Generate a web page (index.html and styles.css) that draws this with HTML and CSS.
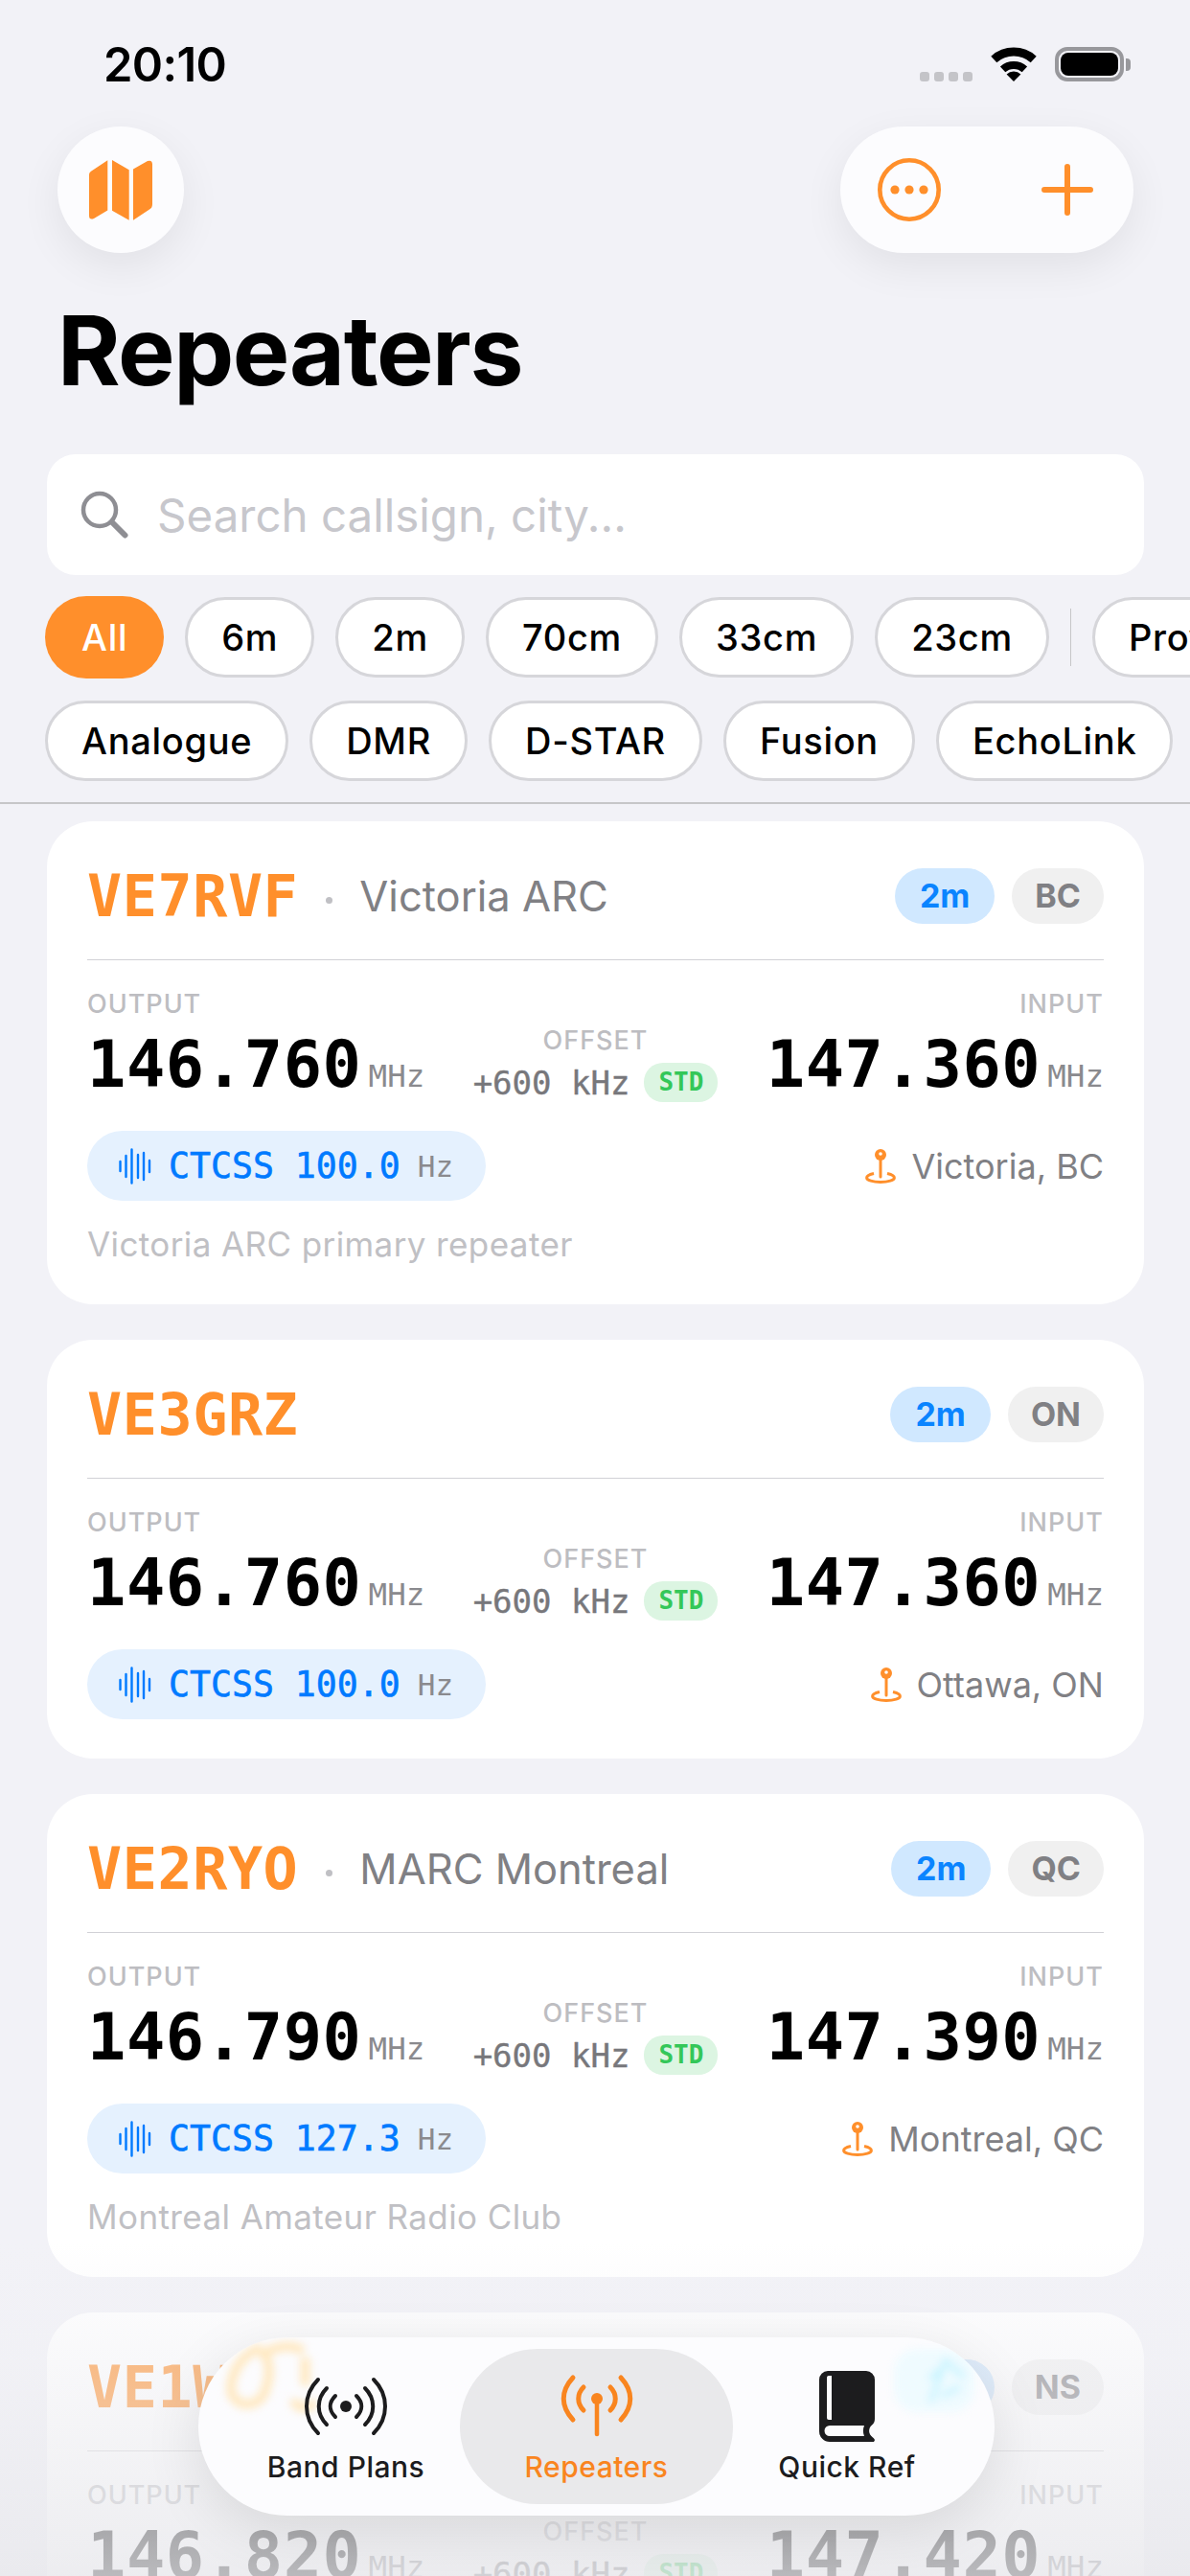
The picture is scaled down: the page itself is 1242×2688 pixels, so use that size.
FILE: index.html
```html
<!DOCTYPE html>
<html lang="en">
<head>
    <meta charset="UTF-8">
    <meta name="viewport" content="width=device-width, initial-scale=1.0">
    <title>Repeaters</title>
    <link rel="stylesheet" href="styles.css">
</head>
<body>
    <svg class="defs" aria-hidden="true">
        <symbol id="wave" viewBox="0 0 34 38">
            <g stroke="#007aff" stroke-width="2.4" stroke-linecap="round">
                <path d="M1.5 14V24M7.5 8V30M13.5 1.5V36.5M20 7V31M26 5V33M32 13V25"/>
            </g>
        </symbol>
        <symbol id="pin" viewBox="0 0 32 36">
            <path d="M9 25.5C4.5 26.5 1.6 28.200 1.6 30C1.600 32.500 8 34.400 16 34.400C24 34.400 30.400 32.500 30.400 30C30.400 28.200 27.500 26.500 23 25.500" fill="none" stroke="#ff8f2b" stroke-width="3"/>
            <path d="M16 10V29" stroke="#ff8f2b" stroke-width="3" stroke-linecap="round"/>
            <circle cx="16" cy="6" r="6" fill="#ff8f2b"/>
            <circle cx="16" cy="5" r="1.800" fill="#fff"/>
        </symbol>
    </svg>

    <header class="status">
        <span class="time">20:10</span>
        <div class="status-icons">
            <div class="signal"><i></i><i></i><i></i><i></i></div>
            <svg class="wifi" viewBox="0 0 48 36">
                <path d="M3.300 13A31 31 0 0 1 44.700 13" fill="none" stroke="#000" stroke-width="9"/>
                <path d="M12.600 23.400A17 17 0 0 1 35.400 23.400" fill="none" stroke="#000" stroke-width="8"/>
                <path d="M24 36L16.600 28.600A10.500 10.500 0 0 1 31.400 28.600Z"/>
            </svg>
            <div class="battery"><i></i></div>
            <div class="battery-cap"></div>
        </div>
    </header>

    <div class="topbar">
        <button class="round-btn">
            <svg width="66" height="63" viewBox="0 0 66 63" fill="#ff8f2b">
                <path d="M0 15Q0 13 2 11.800L19.300 .3V52.500L5 61Q0 63 0 58Z"/>
                <path d="M24 0L41.700 10.300V62.700L24 52.700Z"/>
                <path d="M46 9.500L61 1Q66 -.5 66 4.500V46Q66 50 63 51.500L46 62.700Z"/>
            </svg>
        </button>
        <div class="pill-btn">
            <svg width="66" height="66" viewBox="0 0 66 66" fill="#ff8f2b">
                <circle cx="33" cy="33" r="30.700" fill="none" stroke="#ff8f2b" stroke-width="4.600"/>
                <circle cx="18" cy="33" r="4.600"/>
                <circle cx="33" cy="33" r="4.600"/>
                <circle cx="48" cy="33" r="4.600"/>
            </svg>
            <svg width="54" height="54" viewBox="0 0 54 54">
                <path d="M27 3V51M3 27H51" stroke="#ff8f2b" stroke-width="6" stroke-linecap="round"/>
            </svg>
        </div>
    </div>

    <h1 class="title">Repeaters</h1>

    <div class="search">
        <svg width="50" height="50" viewBox="0 0 50 50" fill="none" stroke="#8e8e93">
            <circle cx="20" cy="20" r="17" stroke-width="4.500"/>
            <path d="M33 33L46.500 46.500" stroke-width="6" stroke-linecap="round"/>
        </svg>
        <span class="placeholder">Search callsign, city...</span>
    </div>

    <div class="filters">
        <div class="chip-row">
            <span class="chip chip-on">All</span>
            <span class="chip">6m</span>
            <span class="chip">2m</span>
            <span class="chip">70cm</span>
            <span class="chip">33cm</span>
            <span class="chip">23cm</span>
            <span class="chip-sep"></span>
            <span class="chip">Province</span>
        </div>
        <div class="chip-row">
            <span class="chip">Analogue</span>
            <span class="chip">DMR</span>
            <span class="chip">D-STAR</span>
            <span class="chip">Fusion</span>
            <span class="chip">EchoLink</span>
        </div>
    </div>

    <main class="list">
        <article class="card">
            <div class="card-head">
                <span class="callsign">VE7RVF</span>
                <span class="dot"></span>
                <span class="club">Victoria ARC</span>
                <span class="badge badge-band">2m</span>
                <span class="badge badge-region">BC</span>
            </div>
            <div class="freqs">
                <div class="freq">
                    <div class="label">OUTPUT</div>
                    <div class="value">146.760<small>MHz</small></div>
                </div>
                <div class="offset">
                    <div class="label">OFFSET</div>
                    <div class="offset-row"><span class="offset-value">+600 kHz</span><span class="std">STD</span></div>
                </div>
                <div class="freq freq-in">
                    <div class="label">INPUT</div>
                    <div class="value">147.360<small>MHz</small></div>
                </div>
            </div>
            <div class="tone-row">
                <div class="tone">
                    <svg width="34" height="38"><use href="#wave"/></svg>
                    <span class="tone-value">CTCSS 100.0</span><span class="tone-unit">Hz</span>
                </div>
                <div class="place">
                    <svg width="32" height="36"><use href="#pin"/></svg>
                    <span>Victoria, BC</span>
                </div>
            </div>
            <p class="note">Victoria ARC primary repeater</p>
        </article>

        <article class="card">
            <div class="card-head">
                <span class="callsign">VE3GRZ</span>
                <span class="badge badge-band">2m</span>
                <span class="badge badge-region">ON</span>
            </div>
            <div class="freqs">
                <div class="freq">
                    <div class="label">OUTPUT</div>
                    <div class="value">146.760<small>MHz</small></div>
                </div>
                <div class="offset">
                    <div class="label">OFFSET</div>
                    <div class="offset-row"><span class="offset-value">+600 kHz</span><span class="std">STD</span></div>
                </div>
                <div class="freq freq-in">
                    <div class="label">INPUT</div>
                    <div class="value">147.360<small>MHz</small></div>
                </div>
            </div>
            <div class="tone-row">
                <div class="tone">
                    <svg width="34" height="38"><use href="#wave"/></svg>
                    <span class="tone-value">CTCSS 100.0</span><span class="tone-unit">Hz</span>
                </div>
                <div class="place">
                    <svg width="32" height="36"><use href="#pin"/></svg>
                    <span>Ottawa, ON</span>
                </div>
            </div>
        </article>

        <article class="card">
            <div class="card-head">
                <span class="callsign">VE2RYO</span>
                <span class="dot"></span>
                <span class="club">MARC Montreal</span>
                <span class="badge badge-band">2m</span>
                <span class="badge badge-region">QC</span>
            </div>
            <div class="freqs">
                <div class="freq">
                    <div class="label">OUTPUT</div>
                    <div class="value">146.790<small>MHz</small></div>
                </div>
                <div class="offset">
                    <div class="label">OFFSET</div>
                    <div class="offset-row"><span class="offset-value">+600 kHz</span><span class="std">STD</span></div>
                </div>
                <div class="freq freq-in">
                    <div class="label">INPUT</div>
                    <div class="value">147.390<small>MHz</small></div>
                </div>
            </div>
            <div class="tone-row">
                <div class="tone">
                    <svg width="34" height="38"><use href="#wave"/></svg>
                    <span class="tone-value">CTCSS 127.3</span><span class="tone-unit">Hz</span>
                </div>
                <div class="place">
                    <svg width="32" height="36"><use href="#pin"/></svg>
                    <span>Montreal, QC</span>
                </div>
            </div>
            <p class="note">Montreal Amateur Radio Club</p>
        </article>

        <article class="card">
            <div class="card-head">
                <span class="callsign">VE1WRC</span>
                <span class="badge badge-band">2m</span>
                <span class="badge badge-region">NS</span>
            </div>
            <div class="freqs">
                <div class="freq">
                    <div class="label">OUTPUT</div>
                    <div class="value">146.820<small>MHz</small></div>
                </div>
                <div class="offset">
                    <div class="label">OFFSET</div>
                    <div class="offset-row"><span class="offset-value">+600 kHz</span><span class="std">STD</span></div>
                </div>
                <div class="freq freq-in">
                    <div class="label">INPUT</div>
                    <div class="value">147.420<small>MHz</small></div>
                </div>
            </div>
        </article>
    </main>

    <div class="fade"></div>

    <nav class="tabbar">
        <!-- colour smears the glass picks up from the card below -->
        <svg class="smear smear-orange" width="108" height="84" viewBox="0 0 100 80" fill="none" stroke="#ffe8bf" stroke-width="9">
            <path d="M38 8C20 14 8 32 8 50C10 66 30 70 40 56C48 40 48 22 40 14C60 4 72 6 80 12M70 60C74 70 84 70 92 62M82 18V46"/>
        </svg>
        <div class="smear smear-blob"></div>
        <svg class="smear smear-cyan" width="64" height="56" viewBox="0 0 84 68" fill="none" stroke="#c4f3ff" stroke-width="6">
            <path d="M32 62L52 6L78 28M46 54L72 42M30 30L46 18"/>
        </svg>
        <div class="tab">
            <svg width="88" height="74" viewBox="-44 -37 88 74" fill="none" stroke="#1c1c1e" stroke-width="4" stroke-linecap="round">
                <circle r="6" fill="#1c1c1e" stroke="none"/>
                <path d="M29 -28C45 -12 45 12 29 28M20 -19C31 -8 31 8 20 19M11 -11C18 -4 18 4 11 11"/>
                <path d="M-29 -28C-45 -12 -45 12 -29 28M-20 -19C-31 -8 -31 8 -20 19M-11 -11C-18 -4 -18 4 -11 11"/>
            </svg>
            <span>Band Plans</span>
        </div>
        <div class="tab tab-on">
            <svg width="76" height="74" viewBox="-38 -29 76 74" fill="none" stroke="#f9851f" stroke-width="5" stroke-linecap="round">
                <circle r="6" fill="#f9851f" stroke="none"/>
                <path d="M0 4V37" stroke-width="4.500"/>
                <path d="M25 -22C38 -8 38 8 25 22M14 -12C21 -5 21 5 14 12"/>
                <path d="M-25 -22C-38 -8 -38 8 -25 22M-14 -12C-21 -5 -21 5 -14 12"/>
            </svg>
            <span>Repeaters</span>
        </div>
        <div class="tab">
            <svg width="58" height="74" viewBox="0 0 58 74">
                <path d="M9 0H49A9 9 0 0 1 58 9V50C58 53 57 55 55 56.500C51 60 51 66 56 69.500C59 71.500 58 74 56 74H11A11 11 0 0 1 0 63V9A9 9 0 0 1 9 0Z" fill="#1c1c1e"/>
                <path d="M10 5H13V51H10A2 2 0 0 1 8 49V7A2 2 0 0 1 10 5Z" fill="#fcfcfe"/>
                <path d="M11 57H47C45.500 60.500 45.500 64.500 47 68H11A5.500 5.500 0 0 1 11 57Z" fill="#fcfcfe"/>
            </svg>
            <span>Quick Ref</span>
        </div>
    </nav>
</body>
</html>
```

FILE: styles.css
```css
* {
    box-sizing: border-box;
}
html, body {
    margin: 0;
    padding: 0;
}
body {
    position: relative;
    width: 1242px;
    height: 2688px;
    overflow: hidden;
    background-color: #f2f2f7;
    font-family: Inter, "Noto Sans", sans-serif;
    color: #000;
}
.defs {
    display: none;
}

/* status bar */
.status {
    display: flex;
    justify-content: space-between;
    height: 132px;
    padding: 40px 62px 0 108px;
}
.time {
    font-size: 49px;
    font-weight: 600;
    line-height: 56px;
    letter-spacing: -.7px;
}
.status-icons {
    display: flex;
    align-items: flex-start;
    height: 40px;
    padding-top: 9px;
}
.signal {
    display: flex;
    gap: 5px;
    margin: 26px 19px 0 0;
}
.signal i {
    width: 10px;
    height: 10px;
    border-radius: 3px;
    background-color: #c4c4c8;
}
.wifi {
    width: 48px;
    height: 36px;
    margin-right: 19px;
}
.battery {
    width: 72px;
    height: 36px;
    padding: 2px;
    border: 4px solid #98989c;
    border-radius: 13px;
}
.battery i {
    display: block;
    height: 100%;
    border-radius: 8px;
    background-color: #000;
}
.battery-cap {
    width: 5px;
    height: 13px;
    margin: 12px 0 0 2px;
    border-radius: 0 4px 4px 0;
    background-color: #98989c;
}

/* top buttons */
.topbar {
    display: flex;
    justify-content: space-between;
    padding: 0 59px 0 60px;
}
.round-btn {
    display: flex;
    align-items: center;
    justify-content: center;
    width: 132px;
    height: 132px;
    padding: 0;
    border: none;
    border-radius: 50%;
    background-color: #fcfcfe;
    box-shadow: 0 14px 44px rgba(0, 0, 0, .07);
}
.pill-btn {
    display: flex;
    align-items: center;
    justify-content: space-between;
    width: 306px;
    height: 132px;
    padding: 0 42px 0 39px;
    border-radius: 66px;
    background-color: #fcfcfe;
    box-shadow: 0 14px 44px rgba(0, 0, 0, .07);
}
.title {
    margin: 42px 0 48px 60px;
    font-size: 100px;
    font-weight: 700;
    line-height: 120px;
    letter-spacing: -1.400px;
}

/* search and filters */
.search {
    display: flex;
    align-items: center;
    gap: 30px;
    height: 126px;
    margin: 0 48px 0 49px;
    padding-left: 35px;
    border-radius: 30px;
    background-color: #fff;
}
.placeholder {
    font-size: 47.500px;
    color: #c7c7cc;
}
.filters {
    display: flex;
    flex-direction: column;
    gap: 23px;
    padding: 22px 0 22px 47px;
    border-bottom: 2px solid #c6c6c8;
}
.chip-row {
    display: flex;
    align-items: center;
    gap: 22px;
    height: 86px;
    white-space: nowrap;
}
.chip-row + .chip-row {
    height: 84px;
}
.chip {
    flex-shrink: 0;
    height: 84px;
    padding: 0 35px;
    border: 3px solid #d6d6da;
    border-radius: 42px;
    background-color: #fff;
    font-size: 38px;
    font-weight: 500;
    line-height: 78px;
    letter-spacing: .7px;
}
.chip-on {
    height: 86px;
    padding: 0 38px;
    border: none;
    border-radius: 43px;
    background-color: #ff8f2b;
    color: #fff;
    line-height: 86px;
}
.chip-sep {
    flex-shrink: 0;
    width: 1px;
    height: 60px;
    background-color: #c6c6c8;
}

/* repeater cards */
.list {
    display: flex;
    flex-direction: column;
    gap: 37px;
    padding: 18px 48px 0 49px;
}
.card {
    flex-shrink: 0;
    padding: 49px 42px 41px;
    border-radius: 48px;
    background-color: #fff;
}
.card-head {
    display: flex;
    align-items: center;
    height: 96px;
    padding-bottom: 37px;
    border-bottom: 1.5px solid #d1d1d6;
}
.callsign {
    font-family: "DejaVu Sans Mono", monospace;
    font-size: 60px;
    font-weight: 700;
    letter-spacing: .6px;
    color: #ff8f2b;
}
.dot {
    width: 7px;
    height: 7px;
    margin: 8px 28px 0 29px;
    border-radius: 50%;
    background-color: #c0c0c4;
}
.club {
    font-size: 43.500px;
    color: #808084;
}
.badge {
    height: 58px;
    padding: 0 26px;
    border-radius: 29px;
    font-size: 34px;
    font-weight: 700;
    line-height: 58px;
}
.badge-band {
    margin-left: auto;
    background-color: #d0e8ff;
    color: #0a84ff;
}
.badge-region {
    margin-left: 18px;
    padding: 0 24px;
    background-color: #f0f0f0;
    color: #808084;
}

.freqs {
    display: flex;
    justify-content: space-between;
    align-items: flex-start;
    padding-top: 32px;
}
.label {
    font-size: 27px;
    font-weight: 500;
    line-height: 28px;
    letter-spacing: 1px;
    color: #bdbdc1;
}
.value {
    margin-top: 16px;
    font-family: "DejaVu Sans Mono", monospace;
    font-size: 67px;
    font-weight: 700;
    line-height: 66px;
    letter-spacing: .6px;
    white-space: nowrap;
}
.value small {
    margin-left: 7px;
    font-size: 32.500px;
    font-weight: 400;
    line-height: 1;
    letter-spacing: 0;
    color: #8a8a8e;
}
.freq-in .label {
    text-align: right;
}
.offset {
    margin-top: 38px;
    text-align: center;
}
.offset-row {
    display: flex;
    align-items: center;
    gap: 15px;
    height: 41px;
    margin-top: 9px;
}
.offset-value {
    font-family: "DejaVu Sans Mono", monospace;
    font-size: 34px;
    color: #77777b;
    -webkit-text-stroke: .4px #77777b;
}
.std {
    height: 41px;
    padding: 0 15px;
    border-radius: 20px;
    background-color: #dcf5e2;
    font-family: "DejaVu Sans Mono", monospace;
    font-size: 26px;
    font-weight: 700;
    line-height: 41px;
    color: #34c759;
}

.tone-row {
    display: flex;
    justify-content: space-between;
    align-items: center;
    margin-top: 30px;
}
.tone {
    display: flex;
    align-items: center;
    height: 73px;
    padding: 0 34px 0 33px;
    border-radius: 37px;
    background-color: #e5f1fe;
}
.tone-value {
    margin-left: 18px;
    font-family: "DejaVu Sans Mono", monospace;
    font-size: 36.500px;
    color: #007aff;
    -webkit-text-stroke: .6px #007aff;
}
.tone-unit {
    margin-left: 18px;
    font-family: "DejaVu Sans Mono", monospace;
    font-size: 31px;
    color: #8a8a8e;
}
.place {
    display: flex;
    align-items: center;
    gap: 16px;
    font-size: 36px;
    color: #808084;
}
.note {
    margin: 23px 0 0;
    font-size: 35px;
    line-height: 44px;
    letter-spacing: .4px;
    color: #c0c0c4;
}

/* bottom fade and floating tab bar */
.fade {
    position: absolute;
    left: 0;
    right: 0;
    top: 2340px;
    bottom: 0;
    background: linear-gradient(rgba(240, 240, 244, 0), rgba(240, 240, 244, .45) 35%, rgba(232, 232, 236, .8));
}
.tabbar {
    position: absolute;
    left: 207px;
    top: 2439px;
    display: flex;
    justify-content: center;
    align-items: center;
    width: 831px;
    height: 186px;
    border-radius: 93px;
    background-color: #fcfcfe;
    box-shadow: 0 16px 60px rgba(0, 0, 0, .1);
    overflow: hidden;
}
.smear {
    position: absolute;
    filter: blur(4px);
}
.smear-orange {
    left: 24px;
    top: 2px;
}
.smear-blob {
    left: 726px;
    top: 12px;
    width: 84px;
    height: 66px;
    border-radius: 24px;
    background-color: #effbff;
}
.smear-cyan {
    left: 740px;
    top: 18px;
}
.tab {
    position: relative;
    display: flex;
    flex-direction: column;
    align-items: center;
    width: 262px;
    height: 162px;
    padding-top: 23px;
    font-size: 30px;
    font-weight: 500;
    line-height: 36px;
    letter-spacing: .5px;
    color: #1c1c1e;
}
.tab span {
    margin-top: 8px;
}
.tab-on {
    flex-shrink: 0;
    width: 285px;
    margin: 0 -12px;
    border-radius: 81px;
    background-color: #e9e9eb;
    color: #f9851f;
}
```
